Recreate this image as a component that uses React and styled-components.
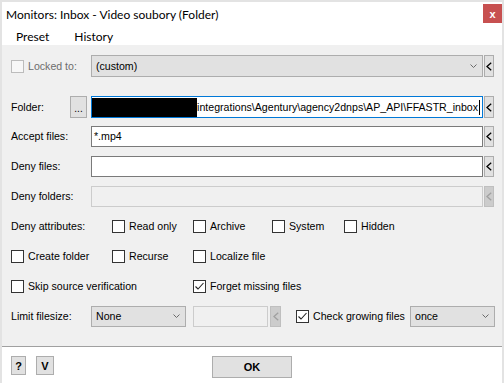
import React from "react";
import styled, { createGlobalStyle } from "styled-components";

const GlobalStyle = createGlobalStyle`
  html, body {
    margin: 0;
    padding: 0;
  }
  body {
    background: #e3e3e3;
    font-family: "Liberation Sans", Arial, sans-serif;
    font-size: 10.6px;
    color: #000;
  }
`;

const px = (v) => (typeof v === "number" ? `${v}px` : v || "0");

const Window = styled.div`
  margin: 2px 0 0 2px;
  width: 500px;
  height: 381px;
  display: flex;
  flex-direction: column;
  background: #f0f0f0;
  overflow: hidden;
`;

const TitleBar = styled.div`
  height: 25px;
  flex-shrink: 0;
  display: flex;
  align-items: center;
  padding-left: 4px;
  background: #fff;
  font-family: Lato, "Liberation Sans", sans-serif;
  font-size: 12px;
`;

const CloseButton = styled.div`
  margin-left: auto;
  align-self: flex-start;
  margin-top: 2px;
  width: 19px;
  height: 19px;
  display: flex;
  align-items: center;
  justify-content: center;
  background: #c75050;
  color: #fff;
  font-family: "Liberation Sans", Arial, sans-serif;
  font-weight: bold;
  font-size: 11px;
`;

const MenuBar = styled.div`
  height: 18px;
  flex-shrink: 0;
  display: flex;
  align-items: center;
  padding-left: 14px;
  background: #fff;
  font-family: Lato, "Liberation Sans", sans-serif;
  font-size: 12px;
`;

const MenuItem = styled.span`
  margin-right: 25px;
`;

const Content = styled.div`
  flex: 1;
  padding: 10px 0 0 9px;
`;

const Row = styled.div`
  display: flex;
  align-items: center;
  height: ${(p) => p.$h || 30}px;
  margin-bottom: ${(p) => p.$mb || 0}px;
`;

const Label = styled.span`
  width: ${(p) => p.$w || 80}px;
  flex-shrink: 0;
  white-space: nowrap;
  color: ${(p) => (p.$disabled ? "#6d6d6d" : "#000")};
`;

const TextBox = styled.div`
  box-sizing: border-box;
  width: ${(p) => p.$w || 392}px;
  height: ${(p) => p.$h || 21}px;
  margin-left: ${(p) => px(p.$ml)};
  display: flex;
  align-items: center;
  padding: 0 2px;
  overflow: hidden;
  white-space: nowrap;
  background: ${(p) => (p.$disabled ? "#f0f0f0" : "#fff")};
  border: 1px solid
    ${(p) => (p.$focused ? "#0078d7" : p.$disabled ? "#cccccc" : "#7a7a7a")};
`;

const Redacted = styled.span`
  flex: 1;
  height: 19px;
  margin-left: -2px;
  background: #000;
`;

const Caret = styled.span`
  width: 1px;
  height: 15px;
  margin-left: 1px;
  flex-shrink: 0;
  background: #000;
`;

const SideButton = styled.div`
  box-sizing: border-box;
  width: ${(p) => p.$w || 10}px;
  height: ${(p) => p.$h || 21}px;
  margin-left: ${(p) => px(p.$ml ?? 1)};
  flex-shrink: 0;
  display: flex;
  align-items: center;
  justify-content: center;
  background: ${(p) => (p.$disabled ? "#cccccc" : "#e1e1e1")};
  border: 1px solid ${(p) => (p.$disabled ? "#bfbfbf" : "#adadad")};
  color: ${(p) => (p.$disabled ? "#a0a0a0" : "#000")};
`;

const BrowseButton = styled.div`
  box-sizing: border-box;
  width: 17px;
  height: 22px;
  margin-right: 4px;
  display: flex;
  align-items: flex-end;
  justify-content: center;
  padding-bottom: 4px;
  background: #e1e1e1;
  border: 1px solid #adadad;
  font-size: 10px;
  line-height: 8px;
`;

const Combo = styled.div`
  box-sizing: border-box;
  width: ${(p) => p.$w}px;
  height: ${(p) => p.$h || 21}px;
  margin-left: ${(p) => px(p.$ml)};
  margin-right: ${(p) => px(p.$mr)};
  flex-shrink: 0;
  display: flex;
  align-items: center;
  justify-content: space-between;
  padding: 0 5px 0 4px;
  background: #e1e1e1;
  border: 1px solid #adadad;
  white-space: nowrap;
`;

const CheckGrid = styled.div`
  display: grid;
  grid-template-columns: 101px 81px 79px 72px auto;
  align-items: center;
  height: 30px;
`;

const CheckLabel = styled.label`
  display: flex;
  align-items: center;
  gap: 4px;
  white-space: nowrap;
  grid-column: ${(p) => p.$col || "auto"};
  margin-left: ${(p) => px(p.$ml)};
  color: ${(p) => (p.$disabled ? "#6d6d6d" : "#000")};
`;

const Box = styled.span`
  box-sizing: border-box;
  width: 13px;
  height: 13px;
  flex-shrink: 0;
  display: inline-flex;
  align-items: center;
  justify-content: center;
  background: ${(p) => (p.$disabled ? "#f7f7f7" : "#fff")};
  border: 1px solid ${(p) => (p.$disabled ? "#bcbcbc" : "#333")};
`;

const Footer = styled.div`
  box-sizing: border-box;
  height: 37px;
  flex-shrink: 0;
  display: grid;
  grid-template-columns: 1fr auto 1fr;
  align-items: start;
  padding-top: 9px;
  background: #fff;
  border-top: 1px solid #a0a0a0;
`;

const FooterLeft = styled.div`
  display: flex;
  gap: 10px;
  padding-left: 9px;
`;

const Button = styled.div`
  box-sizing: border-box;
  width: ${(p) => p.$w}px;
  height: ${(p) => p.$h}px;
  display: flex;
  align-items: center;
  justify-content: center;
  background: #e1e1e1;
  border: 1px solid #adadad;
  font-weight: bold;
  font-size: 11px;
`;

const Chevron = () => (
  <svg width="7" height="4" viewBox="0 0 7 4">
    <polyline points="0.5,0.5 3.5,3.5 6.5,0.5" fill="none" stroke="#6a6a6a" strokeWidth="1" />
  </svg>
);

const Back = ({ color }) => (
  <svg width="6" height="9" viewBox="0 0 6 9">
    <polyline points="5.2,0.8 1,4.5 5.2,8.2" fill="none" stroke={color || "currentColor"} strokeWidth="1.3" />
  </svg>
);

const Check = () => (
  <svg width="11" height="11" viewBox="0 0 11 11">
    <polyline points="1.5,5.5 4,8 9.5,2" fill="none" stroke="#222" strokeWidth="1.1" />
  </svg>
);

const CheckBox = ({ label, checked, disabled, col, ml }) => (
  <CheckLabel $col={col} $ml={ml} $disabled={disabled}>
    <Box $disabled={disabled}>{checked && <Check />}</Box>
    {label}
  </CheckLabel>
);

const fields = [
  { label: "Accept files:", value: "*.mp4" },
  { label: "Deny files:", value: "" },
  { label: "Deny folders:", value: "", disabled: true },
];

export default function App() {
  return (
    <>
      <GlobalStyle />
      <Window>
        <TitleBar>
          Monitors: Inbox - Video soubory (Folder)
          <CloseButton>x</CloseButton>
        </TitleBar>
        <MenuBar>
          <MenuItem>Preset</MenuItem>
          <MenuItem>History</MenuItem>
        </MenuBar>
        <Content>
          <Row $h={22} $mb={19}>
            <Label $disabled>
              <CheckBox label="Locked to:" disabled />
            </Label>
            <Combo $w={392} $h={22}>
              (custom)
              <Chevron />
            </Combo>
            <SideButton $h={22}>
              <Back />
            </SideButton>
          </Row>

          <Row $h={22} $mb={3}>
            <Label $w={59}>Folder:</Label>
            <BrowseButton>...</BrowseButton>
            <TextBox $h={22} $focused>
              <Redacted />
              integrations\Agentury\agency2dnps\AP_API\FFASTR_inbox
              <Caret />
            </TextBox>
            <SideButton $h={22}>
              <Back />
            </SideButton>
          </Row>

          {fields.map((f) => (
            <Row key={f.label}>
              <Label>{f.label}</Label>
              <TextBox $disabled={f.disabled}>{f.value}</TextBox>
              <SideButton $disabled={f.disabled}>
                <Back />
              </SideButton>
            </Row>
          ))}

          <CheckGrid>
            <Label>Deny attributes:</Label>
            <CheckBox label="Read only" />
            <CheckBox label="Archive" />
            <CheckBox label="System" />
            <CheckBox label="Hidden" />
          </CheckGrid>

          <CheckGrid>
            <CheckBox label="Create folder" />
            <CheckBox label="Recurse" />
            <CheckBox label="Localize file" />
          </CheckGrid>

          <CheckGrid>
            <CheckBox label="Skip source verification" col="1 / 3" />
            <CheckBox label="Forget missing files" checked col="3 / 6" />
          </CheckGrid>

          <Row>
            <Label>Limit filesize:</Label>
            <Combo $w={95}>
              None
              <Chevron />
            </Combo>
            <TextBox $w={75} $ml={7} $disabled />
            <SideButton $w={11} $ml={2} $disabled>
              <Back />
            </SideButton>
            <CheckBox label="Check growing files" checked ml={15} />
            <Combo $w={85} $ml="auto" $mr={7}>
              once
              <Chevron />
            </Combo>
          </Row>
        </Content>
        <Footer>
          <FooterLeft>
            <Button $w={15} $h={19}>?</Button>
            <Button $w={18} $h={19}>V</Button>
          </FooterLeft>
          <Button $w={80} $h={22}>OK</Button>
        </Footer>
      </Window>
    </>
  );
}
